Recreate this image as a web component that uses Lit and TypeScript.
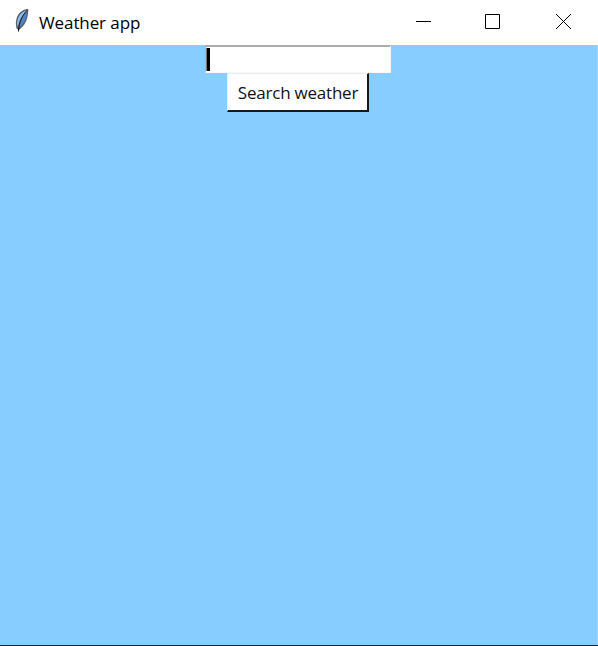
import { LitElement, html, css, svg } from "lit";
import { customElement } from "lit/decorators.js";

@customElement("app-root")
export class AppRoot extends LitElement {
  static styles = css`
    :host {
      display: flex;
      flex-direction: column;
      box-sizing: border-box;
      width: 598px;
      height: 646px;
      background: #87cdff;
      border-bottom: 1px solid #16222c;
      overflow: hidden;
      font-family: "Open Sans", "Noto Sans", sans-serif;
      color: #000;
    }
    .titlebar {
      display: flex;
      align-items: center;
      flex: none;
      height: 45px;
      box-sizing: border-box;
      padding-left: 14px;
      background: #fff;
    }
    .feather {
      display: block;
      width: 16px;
      height: 26px;
      margin: 0 9px 3px 0;
    }
    .title {
      font-size: 17px;
      line-height: 24px;
      letter-spacing: -0.1px;
      white-space: nowrap;
    }
    .controls {
      display: flex;
      margin: 0 0 3px auto;
      padding-right: 26px;
    }
    .controls svg {
      display: block;
      width: 16px;
      height: 16px;
    }
    .maximize {
      margin: 0 55px 0 53px;
    }
    .client {
      flex: 1;
      display: flex;
      flex-direction: column;
      align-items: center;
      box-sizing: border-box;
      padding-right: 1px;
      border-right: 1px solid #a3d8ff;
    }
    .entry {
      box-sizing: border-box;
      width: 186px;
      height: 28px;
      padding: 1px 0 0 0;
      background: #fff;
      border: 1px solid #f8f8f8;
      border-top: 2px solid #a9abad;
      border-left: 1px solid #b0b4b8;
    }
    .caret {
      width: 3px;
      height: 23px;
      border-left: 1px solid #777;
      background: #000;
    }
    .search {
      box-sizing: border-box;
      width: 142px;
      height: 39px;
      margin: 0;
      padding: 1px 0 0 1px;
      border: solid;
      border-width: 1px 2px 2px 1px;
      border-color: #ececec #15191c #15191c #ececec;
      border-radius: 0;
      background: #fff;
      font: 17px/34px "Open Sans", "Noto Sans", sans-serif;
      letter-spacing: -0.22px;
      color: #111;
      white-space: nowrap;
    }
  `;

  private feather() {
    return svg`
      <path d="M14.4 1 C10 1 5.5 3.5 3 9 C1.5 13 1.6 17 2.6 20.5 L5.5 21.5 C9 19 12 15 13.2 10 C14.2 6 14.2 3 14.4 1Z" fill="#5c6269"/>
      <path d="M12.6 2.4 C9 3 5.8 6 4 10.5 C2.8 14 2.8 16.5 3.8 19 C4.8 13 8 7 12.6 2.4Z" fill="#8dbdf0"/>
      <path d="M13 3 C9 8 6.5 13 5.4 19.2 C9 16.5 11.6 12.5 12.3 8.5Z" fill="#4a86cc"/>
      <path d="M13 2.5 C8 8 5.3 13 4.4 23.6" fill="none" stroke="#1c2530" stroke-width="1"/>
      <path d="M3.2 19.5L5.6 20.5L4.6 23Z" fill="#15191f"/>
    `;
  }

  render() {
    return html`
      <header class="titlebar">
        <svg class="feather" viewBox="0 0 16 26">${this.feather()}</svg>
        <span class="title">Weather app</span>
        <div class="controls">
          <svg viewBox="0 0 16 16" fill="none" stroke="#000"><path d="M0 8.5H15" /></svg>
          <svg class="maximize" viewBox="0 0 16 16" fill="none" stroke="#000"><path d="M.5 1.5H14.5V15.5H.5Z" /></svg>
          <svg viewBox="0 0 16 16" fill="none" stroke="#000"><path d="M0 1L15 16M15 1L0 16" /></svg>
        </div>
      </header>
      <main class="client">
        <div class="entry"><div class="caret"></div></div>
        <button class="search">Search weather</button>
      </main>
    `;
  }
}
